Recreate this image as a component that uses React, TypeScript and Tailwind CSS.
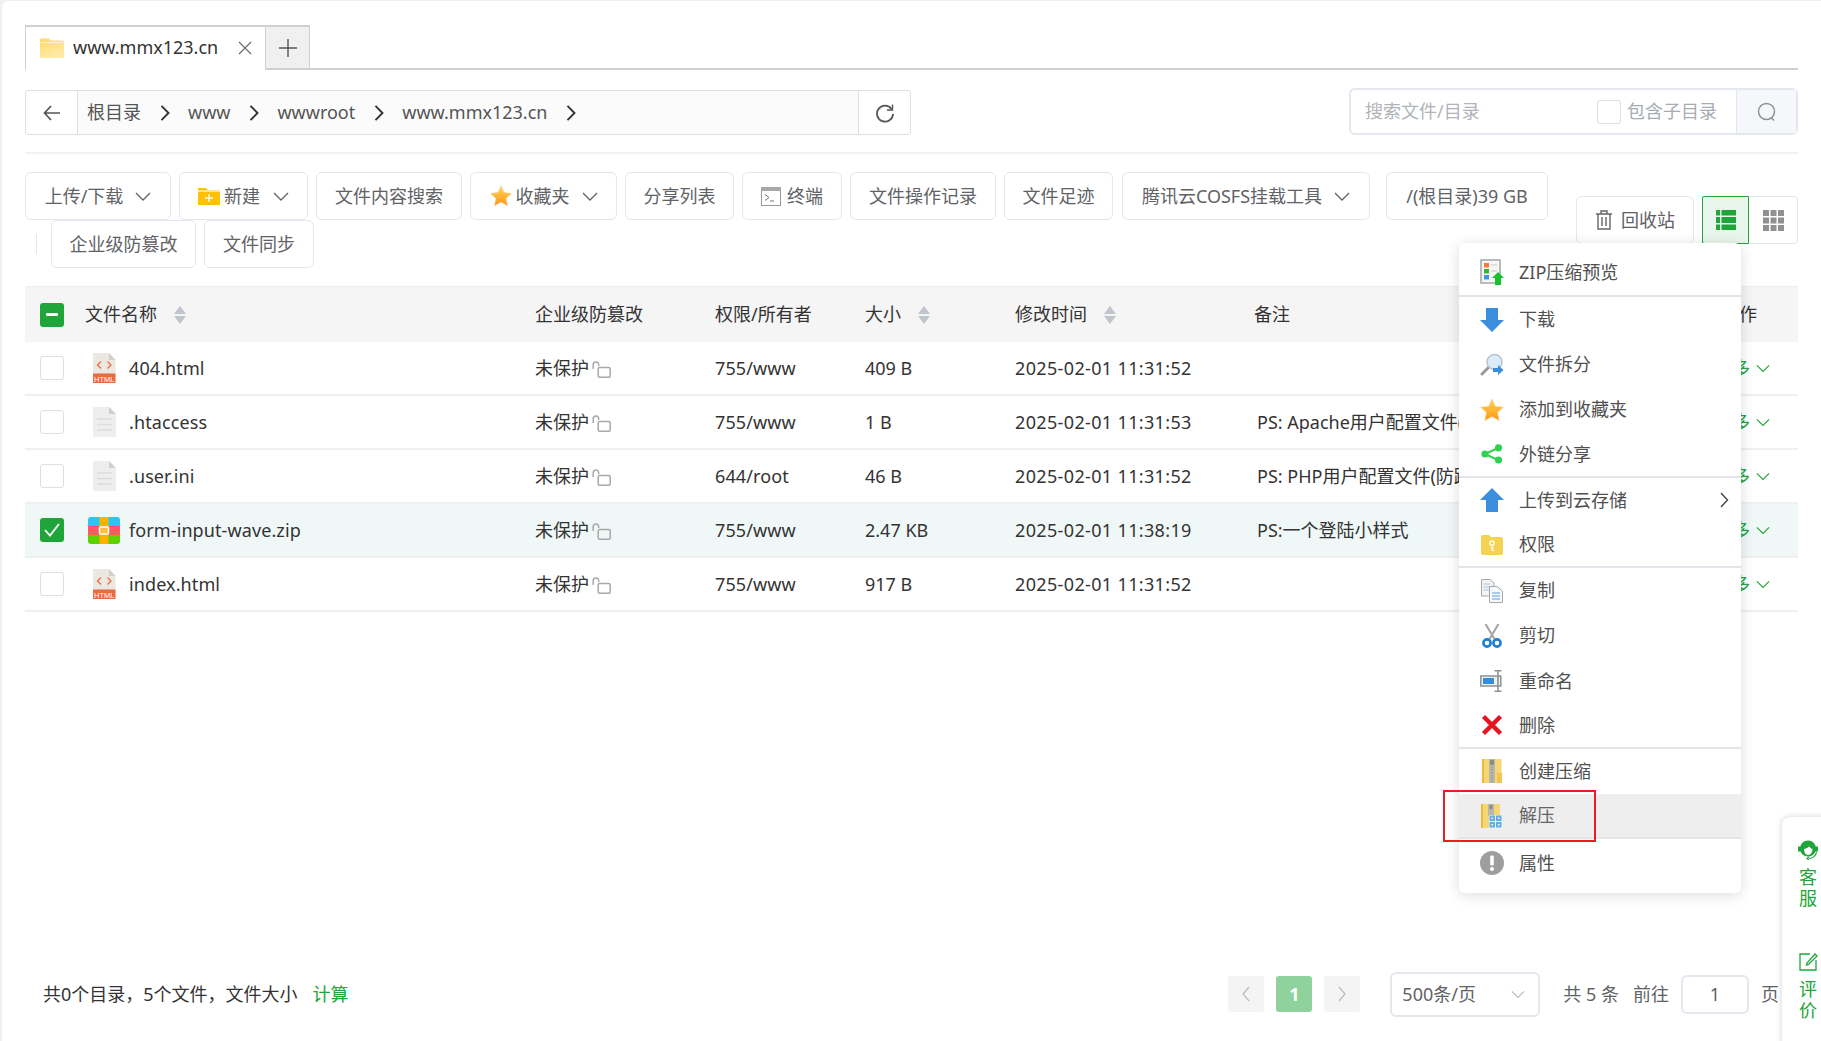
import React from "react";

const FF = { fontFamily: '"Noto Sans","Noto Sans CJK SC",sans-serif' };

function Chevron({ className = "", color = "#606266", size = 16 }: { className?: string; color?: string; size?: number }) {
  return (
    <svg width={size} height={size} viewBox="0 0 16 16" className={className} fill="none" stroke={color} strokeWidth="1.3">
      <path d="M1 5 L8 12 L15 5" />
    </svg>
  );
}
function PathArrow() {
  return (
    <svg width="10" height="16" viewBox="0 0 10 16" fill="none" stroke="#333" strokeWidth="1.9" className="mx-[18.5px]">
      <path d="M1.5 .8 L8.5 8 L1.5 15.2" />
    </svg>
  );
}
function Folder() {
  return (
    <svg width="24" height="20" viewBox="0 0 24 20">
      <defs>
        <linearGradient id="fg" x1="0" y1="0" x2="0.4" y2="1">
          <stop offset="0" stopColor="#ffd966" />
          <stop offset="1" stopColor="#ffe9a8" />
        </linearGradient>
      </defs>
      <path d="M0 2 Q0 .5 1.5 .5 H9 L11 2.5 H22.5 Q24 2.5 24 4 V18.5 Q24 20 22.5 20 H1.5 Q0 20 0 18.5 Z" fill="url(#fg)" />
      <rect x="1" y="4" width="22" height="1" fill="#fff3c8" />
    </svg>
  );
}
function NewFolder() {
  return (
    <svg width="22" height="18" viewBox="0 0 22 18" className="mr-[4px]">
      <path d="M0 1 H8 L10 3 H22 V18 H0 Z" fill="#ffc107" />
      <rect x="0" y="3" width="22" height="2" fill="#ffe58a" />
      <path d="M11 7 V15 M7 11 H15" stroke="#fff" strokeWidth="1.3" />
    </svg>
  );
}
function Star({ size = 22, className = "" }: { size?: number; className?: string }) {
  return (
    <svg width={size} height={size} viewBox="0 0 24 24" className={className}>
      <defs>
        <linearGradient id="sg" x1="0" y1="0" x2="0" y2="1">
          <stop offset="0" stopColor="#ffd75e" />
          <stop offset="1" stopColor="#ff9511" />
        </linearGradient>
      </defs>
      <path d="M12 1 L15.4 8.3 L23.4 9.2 L17.5 14.6 L19.1 22.6 L12 18.6 L4.9 22.6 L6.5 14.6 L.6 9.2 L8.6 8.3 Z" fill="url(#sg)" stroke="#f8c989" strokeWidth=".5" />
    </svg>
  );
}
function Term() {
  return (
    <svg width="20" height="19" viewBox="0 0 20 19" className="mr-[6px]">
      <rect x=".5" y=".5" width="19" height="18" fill="#fff" stroke="#999" />
      <rect x="0" y="0" width="20" height="4" fill="#a8a8a8" />
      <path d="M4 7.5 L8 10.5 L4 13.5 M9 14 H13" fill="none" stroke="#777" strokeWidth="1" />
    </svg>
  );
}
function Btn({ w, children, ml = "" }: { w: string; children: React.ReactNode; ml?: string }) {
  return (
    <div className={`h-[48px] flex items-center justify-center border border-[#e4e7ed] rounded-[6px] text-[18px] text-[#606266] bg-white ${w} ${ml}`}>
      {children}
    </div>
  );
}
function Sort() {
  return (
    <svg width="14" height="18" viewBox="0 0 14 18">
      <path d="M7 0 L13 8 H1 Z" fill="#c0c4cc" />
      <path d="M7 18 L13 10 H1 Z" fill="#c0c4cc" />
    </svg>
  );
}
function Lock() {
  return (
    <svg width="19" height="17" viewBox="0 0 19 17" className="ml-[3px] mt-[2px]" fill="none" stroke="#a8a8a8" strokeWidth="1.5">
      <path d="M1.2 8 V4 Q1.2 1 4 1 Q6.8 1 6.8 5" />
      <rect x="6.2" y="6.5" width="12" height="9.8" rx="1.5" />
    </svg>
  );
}
function HtmlIcon() {
  return (
    <svg width="24" height="30" viewBox="0 0 24 30">
      <path d="M1 0 H17 L23.5 7 V30 H1 Z" fill="#eae8e1" />
      <path d="M17 0 L23.5 7 H17 Z" fill="#d3d0c6" />
      <path d="M9 8.5 L5.5 12 L9 15.5 M15.5 8.5 L19 12 L15.5 15.5" fill="none" stroke="#e9734d" strokeWidth="1.4" />
      <rect x="1" y="20.5" width="22.5" height="9.5" fill="#ea6b3f" />
      <text x="12.2" y="28.6" textAnchor="middle" fontSize="7.5" fill="#fff" style={{ fontFamily: '"Liberation Sans",sans-serif' }}>HTML</text>
    </svg>
  );
}
function TxtIcon() {
  return (
    <svg width="24" height="30" viewBox="0 0 24 30">
      <path d="M1 0 H17 L24 7 V30 H1 Z" fill="#eeeeee" />
      <path d="M17 0 L24 7 H17 Z" fill="#cfcfcf" />
      <path d="M5 12 H20 M5 17.5 H20 M5 23 H20" stroke="#dcdcdc" strokeWidth="1.6" />
    </svg>
  );
}
function ZipIcon() {
  return (
    <svg width="32" height="27" viewBox="0 0 32 27" className="rounded-[3px]">
      <rect x="0" y="0" width="32" height="9" fill="#25c8f2" />
      <rect x="0" y="9" width="32" height="9" fill="#ff5a5f" />
      <rect x="0" y="18" width="32" height="9" fill="#5ed100" />
      <rect x="11.5" y="0" width="9" height="27" fill="#ffb000" />
      <rect x="11.5" y="10" width="9" height="7" rx="1" fill="#ffc040" stroke="#fff" strokeWidth="1.5" />
    </svg>
  );
}
function Check({ state }: { state: "none" | "part" | "on" }) {
  if (state === "part")
    return (
      <div className="w-[24px] h-[24px] rounded-[3px] bg-[#20a53a] flex items-center justify-center">
        <div className="w-[12px] h-[3px] bg-white rounded-[1px]" />
      </div>
    );
  if (state === "on")
    return (
      <div className="w-[24px] h-[24px] rounded-[3px] bg-[#20a53a] flex items-center justify-center">
        <svg width="16" height="14" viewBox="0 0 16 14" fill="none" stroke="#fff" strokeWidth="1.8">
          <path d="M1 7 L6 12.5 L15 1" />
        </svg>
      </div>
    );
  return <div className="w-[24px] h-[24px] rounded-[3px] border border-[#dcdfe6] bg-white" />;
}

const rows = [
  { n: "404.html", i: "h", p: "755/www", s: "409 B", t: "2025-02-01 11:31:52", r: "" },
  { n: ".htaccess", i: "t", p: "755/www", s: "1 B", t: "2025-02-01 11:31:53", r: "PS: Apache用户配置文件(伪静态)" },
  { n: ".user.ini", i: "t", p: "644/root", s: "46 B", t: "2025-02-01 11:31:52", r: "PS: PHP用户配置文件(防跨站)" },
  { n: "form-input-wave.zip", i: "z", p: "755/www", s: "2.47 KB", t: "2025-02-01 11:38:19", r: "PS:一个登陆小样式", on: true },
  { n: "index.html", i: "h", p: "755/www", s: "917 B", t: "2025-02-01 11:31:52", r: "" },
];

const cols = "grid grid-cols-[510px_180px_150px_150px_239px_1fr] items-center";

/* menu icons */
const IcZip = () => (
  <svg width="24" height="26" viewBox="0 0 24 26">
    <rect x="1" y="1" width="19" height="23" fill="#f6f6f4" stroke="#a5a8a6" strokeWidth="1.5" />
    <rect x="4" y="4" width="5" height="4.5" fill="#f3793c" />
    <rect x="4" y="10" width="5" height="4.5" fill="#37b233" />
    <rect x="4" y="16" width="5" height="4.5" fill="#3d96e0" />
    <path d="M11 6 H17 M11 12 H17" stroke="#c9c9c9" />
    <path d="M18 13 L24 19 H21 V26 H15 V19 H12 Z" fill="#17c22f" />
  </svg>
);
const IcDown = () => (
  <svg width="24" height="24" viewBox="0 0 24 24">
    <path d="M6 0 H18 V12 H24 L12 24 L0 12 H6 Z" fill="#3a8edb" />
  </svg>
);
const IcUp = () => (
  <svg width="24" height="24" viewBox="0 0 24 24">
    <path d="M12 0 L24 12 H18 V24 H6 V12 H0 Z" fill="#3a8edb" />
  </svg>
);
const IcSearch = () => (
  <svg width="24" height="24" viewBox="0 0 24 24">
    <path d="M9 14 L2 21" stroke="#9a9a9a" strokeWidth="3" strokeLinecap="round" />
    <circle cx="14.5" cy="9" r="7.5" fill="#dcecfa" stroke="#b4c4d2" strokeWidth="1.5" />
    <path d="M13 15 H18 V12 L23.5 17 L18 22 V19 H13 Z" fill="#3a8edb" />
  </svg>
);
const IcShare = () => (
  <svg width="22" height="20" viewBox="0 0 22 20">
    <path d="M18 3.5 L4 10 L18 16.5" fill="none" stroke="#2ed24e" strokeWidth="2" />
    <circle cx="17.5" cy="3.8" r="3.6" fill="#2ed24e" />
    <circle cx="4" cy="10" r="3.6" fill="#2ed24e" />
    <circle cx="17.5" cy="16" r="3.6" fill="#2ed24e" />
  </svg>
);
const IcPerm = () => (
  <svg width="22" height="20" viewBox="0 0 22 20">
    <path d="M0 2 Q0 0 2 0 H8 L10 2 H20 Q22 2 22 4 V18 Q22 20 20 20 H2 Q0 20 0 18 Z" fill="#f5d352" />
    <circle cx="11" cy="8" r="2.2" fill="none" stroke="#fff" strokeWidth="1.2" />
    <path d="M11 10 V16 M11 13 H13 M11 15.5 H13" stroke="#fff" strokeWidth="1.2" />
  </svg>
);
const IcCopy = () => (
  <svg width="22" height="24" viewBox="0 0 22 24">
    <path d="M.5 .5 H9 L13 4 V17 H.5 Z" fill="#f3f3f3" stroke="#a8a8a8" />
    <path d="M2.5 5 H9 M2.5 8 H9 M2.5 11 H9" stroke="#a4c6ea" />
    <path d="M8.5 7.5 H16 L21.5 12 V23.5 H8.5 Z" fill="#f6f8fb" stroke="#a8a8a8" />
    <path d="M11 14 H19 M11 17 H19 M11 20 H19" stroke="#5b9bdf" strokeWidth="1.2" />
  </svg>
);
const IcCut = () => (
  <svg width="20" height="24" viewBox="0 0 20 24">
    <path d="M3.5 0 L12.5 15 M16.5 0 L7.5 15" stroke="#a4a8ac" strokeWidth="2.2" fill="none" />
    <circle cx="5" cy="19" r="3.6" fill="none" stroke="#1f7fd1" strokeWidth="2.6" />
    <circle cx="15" cy="19" r="3.6" fill="none" stroke="#1f7fd1" strokeWidth="2.6" />
  </svg>
);
const IcRename = () => (
  <svg width="24" height="22" viewBox="0 0 24 22">
    <rect x=".8" y="6" width="20" height="10" fill="#eef0f2" stroke="#8d9296" strokeWidth="1.5" />
    <rect x="3" y="8" width="11" height="6" fill="#2f8ee0" />
    <path d="M18 1 V21 M14.5 .8 H21.5 M14.5 21.2 H21.5" stroke="#8d9296" strokeWidth="1.6" />
  </svg>
);
const IcDel = () => (
  <svg width="22" height="22" viewBox="0 0 22 22">
    <path d="M2.5 2.5 L19.5 19.5 M19.5 2.5 L2.5 19.5" stroke="#e5141f" strokeWidth="4.5" />
  </svg>
);
const IcCompress = () => (
  <svg width="20" height="24" viewBox="0 0 20 24">
    <rect x="0" y="0" width="19.5" height="24" fill="#f6d675" />
    <rect x="0" y="0" width="2" height="24" fill="#eab93e" />
    <path d="M15 14 H20 V24 H15 Z" fill="#f1c550" />
    <rect x="7" y="0" width="6" height="24" fill="#b9b7ab" />
    <path d="M10 1 V23" stroke="#8b8b85" strokeWidth="1" strokeDasharray="1.5 1.5" />
    <rect x="8" y="1" width="4" height="5" rx="1" fill="#8b8b85" />
  </svg>
);
const IcExtract = () => (
  <svg width="21" height="24" viewBox="0 0 21 24">
    <rect x="0" y="0" width="19" height="24" fill="#f6d675" />
    <rect x="0" y="0" width="2" height="24" fill="#eab93e" />
    <rect x="7" y="0" width="6" height="12" fill="#b9b7ab" />
    <rect x="8.5" y="1" width="3" height="4" rx="1" fill="#8b8b85" />
    <rect x="8" y="11" width="13" height="13" fill="#eaf4fc" />
    <rect x="8.5" y="11.5" width="5.5" height="5.5" fill="#61aee6" />
    <rect x="15" y="11.5" width="5.5" height="5.5" fill="#61aee6" />
    <rect x="8.5" y="18" width="5.5" height="5.5" fill="#61aee6" />
    <rect x="15" y="18" width="5.5" height="5.5" fill="#61aee6" />
    <rect x="10.5" y="13.5" width="1.5" height="1.5" fill="#fff" />
    <rect x="17" y="13.5" width="1.5" height="1.5" fill="#fff" />
    <rect x="10.5" y="20" width="1.5" height="1.5" fill="#fff" />
    <rect x="17" y="20" width="1.5" height="1.5" fill="#fff" />
  </svg>
);
const IcInfo = () => (
  <svg width="24" height="24" viewBox="0 0 24 24">
    <circle cx="12" cy="12" r="12" fill="#9e9e9e" />
    <rect x="10.2" y="4.5" width="3.6" height="10" rx="1.2" fill="#fff" />
    <circle cx="12" cy="18" r="2" fill="#fff" />
  </svg>
);

type MI = { t: string; ic: React.ReactNode; h: number; sep?: boolean; hover?: boolean; sub?: boolean };
const H = 45.2;
const menu: MI[] = [
  { t: "ZIP压缩预览", ic: <IcZip />, h: 48, sep: true },
  { t: "下载", ic: <IcDown />, h: H },
  { t: "文件拆分", ic: <IcSearch />, h: H },
  { t: "添加到收藏夹", ic: <Star size={24} />, h: H },
  { t: "外链分享", ic: <IcShare />, h: H, sep: true },
  { t: "上传到云存储", ic: <IcUp />, h: H, sub: true },
  { t: "权限", ic: <IcPerm />, h: H, sep: true },
  { t: "复制", ic: <IcCopy />, h: H },
  { t: "剪切", ic: <IcCut />, h: H },
  { t: "重命名", ic: <IcRename />, h: H },
  { t: "删除", ic: <IcDel />, h: H, sep: true },
  { t: "创建压缩", ic: <IcCompress />, h: H },
  { t: "解压", ic: <IcExtract />, h: H, hover: true, sep: true },
  { t: "属性", ic: <IcInfo />, h: 48 },
];

export default function App() {
  return (
    <div className="w-[1821px] h-[1041px] overflow-hidden relative bg-[#f0f0f0] text-[18px]" style={FF}>
      <div className="ml-[2px] mt-[1px] h-[1040px] bg-white rounded-tl-[6px] px-[23px] pt-[24px] pb-[24px] flex flex-col">
        {/* tabs */}
        <div className="h-[45px] shrink-0 flex items-stretch border-b-2 border-[#d0d0d0]">
          <div className="w-[240px] bg-white border-t-2 border-l border-[#d0d0d0] flex items-center pl-[14px] -mb-[2px] pb-[2px]">
            <Folder />
            <span className="ml-[9px] text-[18px] text-[#333] w-[146px]">www.mmx123.cn</span>
            <svg width="14" height="14" viewBox="0 0 14 14" stroke="#666" strokeWidth="1.1" className="ml-[19px]">
              <path d="M1 1 L13 13 M13 1 L1 13" />
            </svg>
          </div>
          <div className="w-[45px] bg-[#f0f0f0] border-t-2 border-x border-[#d0d0d0] flex items-center justify-center">
            <svg width="18" height="18" viewBox="0 0 18 18" stroke="#555" strokeWidth="1.4">
              <path d="M9 0 V18 M0 9 H18" />
            </svg>
          </div>
        </div>
        {/* path + search */}
        <div className="flex justify-between mt-[18px] border-b-2 border-[#f2f2f2] h-[66px] shrink-0">
          <div className="flex h-[45px] w-[886px] border border-[#dcdfe6] rounded-[3px] mt-[2px]">
            <div className="w-[52px] flex items-center justify-center border-r border-[#dcdfe6]">
              <svg width="18" height="16" viewBox="0 0 18 16" fill="none" stroke="#555" strokeWidth="1.7">
                <path d="M8 1 L1.5 8 L8 15 M1.5 8 H17" />
              </svg>
            </div>
            <div className="w-[781px] bg-[#fbfbfb] flex items-center pl-[9px] text-[#555] border-r border-[#dcdfe6]">
              <span>根目录</span>
              <PathArrow />
              <span>www</span>
              <PathArrow />
              <span>wwwroot</span>
              <PathArrow />
              <span>www.mmx123.cn</span>
              <PathArrow />
            </div>
            <div className="flex-1 flex items-center justify-center">
              <svg width="20" height="20" viewBox="0 0 20 20" fill="none" stroke="#555" strokeWidth="1.8">
                <path d="M16.5 6 A8 8 0 1 0 18 11" />
                <path d="M17.5 1.5 V7 H12" strokeWidth="1.4" />
              </svg>
            </div>
          </div>
          <div className="flex h-[47px] w-[449px] border-2 border-[#e4e7ed] rounded-[6px]">
            <div className="flex-1 flex items-center pl-[14px] text-[#b0b3b8]">
              <span className="w-[232px]">搜索文件/目录</span>
              <div className="w-[24px] h-[24px] border border-[#dcdfe6] rounded-[3px]" />
              <span className="ml-[6px] text-[#a8abb2]">包含子目录</span>
            </div>
            <div className="w-[60px] bg-[#f5f7fa] border-l border-[#e4e7ed] flex items-center justify-center">
              <svg width="20" height="20" viewBox="0 0 20 20" fill="none" stroke="#8d9095" strokeWidth="1.5">
                <circle cx="9.5" cy="9.5" r="8" />
                <path d="M14 15.5 L17 18.5" />
              </svg>
            </div>
          </div>
        </div>
        {/* toolbar */}
        <div className="flex items-center justify-between mt-[18px] h-[96px] shrink-0">
          <div className="flex flex-col">
            <div className="flex gap-[8px]">
              <Btn w="w-[146px]">上传/下载<Chevron className="ml-[12px]" /></Btn>
              <Btn w="w-[129px]"><NewFolder />新建<Chevron className="ml-[13px]" /></Btn>
              <Btn w="w-[146px]">文件内容搜索</Btn>
              <Btn w="w-[147px]"><Star className="mr-[4px]" />收藏夹<Chevron className="ml-[12px]" /></Btn>
              <Btn w="w-[109px]">分享列表</Btn>
              <Btn w="w-[100px]"><Term />终端</Btn>
              <Btn w="w-[146px]">文件操作记录</Btn>
              <Btn w="w-[109px]">文件足迹</Btn>
              <Btn w="w-[248px]" ml="ml-[1px]">腾讯云COSFS挂载工具<Chevron className="ml-[12px]" /></Btn>
              <Btn w="w-[162px]" ml="ml-[8px]">/(根目录)39 GB</Btn>
            </div>
            <div className="flex gap-[8px] items-center">
              <div className="w-px h-[20px] bg-[#e4e7ed] ml-[11px] mr-[6px]" />
              <Btn w="w-[145px]">企业级防篡改</Btn>
              <Btn w="w-[110px]">文件同步</Btn>
            </div>
          </div>
          <div className="flex items-center">
            <Btn w="w-[118px]">
              <svg width="18" height="20" viewBox="0 0 18 20" fill="none" stroke="#666" strokeWidth="1.4" className="mr-[8px]">
                <path d="M1 4 H17 M6 4 V1 H12 V4 M3 4 V19 H15 V4 M7 7 V16 M11 7 V16" />
              </svg>
              回收站
            </Btn>
            <div className="w-[47px] h-[48px] ml-[8px] bg-[#e8f5ea] border border-[#20a53a] flex items-center justify-center rounded-l-[2px]">
              <svg width="20" height="20" viewBox="0 0 20 20" fill="#20a53a">
                <rect x="0" y="0" width="4" height="5.5" />
                <rect x="5.5" y="0" width="14.5" height="5.5" />
                <rect x="0" y="7" width="4" height="6" />
                <rect x="5.5" y="7" width="14.5" height="6" />
                <rect x="0" y="14.5" width="4" height="5.5" />
                <rect x="5.5" y="14.5" width="14.5" height="5.5" />
              </svg>
            </div>
            <div className="w-[49px] h-[48px] border border-l-0 border-[#e4e7ed] flex items-center justify-center rounded-r-[4px]">
              <svg width="21" height="21" viewBox="0 0 21 21" fill="#909090">
                {[0, 7.5, 15].flatMap((y) => [0, 7.5, 15].map((x) => <rect key={`${x}-${y}`} x={x} y={y} width="6" height="6" />))}
              </svg>
            </div>
          </div>
        </div>
        {/* table */}
        <div className="mt-[18px] text-[#333] shrink-0">
          <div className={`${cols} h-[56px] bg-[#f5f5f5] border-t border-[#eeeeee]`}>
            <div className="flex items-center pl-[15px]">
              <Check state="part" />
              <span className="ml-[21px] text-[#333]">文件名称</span>
              <span className="ml-[16px] flex"><Sort /></span>
            </div>
            <div>企业级防篡改</div>
            <div>权限/所有者</div>
            <div className="flex items-center">大小<span className="ml-[16px] flex"><Sort /></span></div>
            <div className="flex items-center">修改时间<span className="ml-[16px] flex"><Sort /></span></div>
            <div className="flex items-center justify-between pr-[41px]"><span>备注</span><span>操作</span></div>
          </div>
          {rows.map((r) => (
            <div key={r.n} className={`${cols} h-[54px] border-b-2 border-[#f0f0f0] ${r.on ? "bg-[#f0f8f7]" : "bg-white"}`}>
              <div className="flex items-center pl-[15px]">
                <Check state={r.on ? "on" : "none"} />
                <span className="w-[65px] pl-[14px] flex items-center justify-center">
                  {r.i === "h" ? <HtmlIcon /> : r.i === "t" ? <TxtIcon /> : <ZipIcon />}
                </span>
                <span className="tracking-[0.1px]">{r.n}</span>
              </div>
              <div className="flex items-center">未保护<Lock /></div>
              <div className="tracking-[0.1px]">{r.p}</div>
              <div>{r.s}</div>
              <div className="tracking-[0.35px]">{r.t}</div>
              <div className="flex items-center justify-between pl-[3px] pr-[28px] whitespace-nowrap overflow-hidden">
                <span>{r.r}</span>
                <span className="flex items-center text-[#20a53a] shrink-0 ml-auto">更多<Chevron color="#20a53a" size={14} className="ml-[6px]" /></span>
              </div>
            </div>
          ))}
        </div>
        {/* footer */}
        <div className="mt-auto pl-[18px] pr-[19px] h-[46px] shrink-0 flex items-center text-[#333]">
          <span>共0个目录，5个文件，文件大小</span>
          <span className="ml-[15px] text-[#20a53a]">计算</span>
          <div className="ml-auto flex items-center text-[#606266]">
            <div className="w-[36px] h-[36px] bg-[#f4f4f5] rounded-[3px] flex items-center justify-center">
              <svg width="10" height="16" viewBox="0 0 10 16" fill="none" stroke="#b8bcc4" strokeWidth="1.2"><path d="M8 1 L2 8 L8 15" /></svg>
            </div>
            <div className="w-[36px] h-[36px] ml-[12px] bg-[#90d29d] rounded-[3px] flex items-center justify-center text-white font-bold">1</div>
            <div className="w-[36px] h-[36px] ml-[12px] bg-[#f4f4f5] rounded-[3px] flex items-center justify-center">
              <svg width="10" height="16" viewBox="0 0 10 16" fill="none" stroke="#b8bcc4" strokeWidth="1.2"><path d="M2 1 L8 8 L2 15" /></svg>
            </div>
            <div className="w-[150px] h-[45px] ml-[30px] border-2 border-[#e4e7ed] rounded-[6px] flex items-center justify-between pl-[10px] pr-[13px]">
              <span>500条/页</span>
              <Chevron color="#b8bcc4" size={14} />
            </div>
            <span className="ml-[23px] whitespace-pre">共 5 条</span>
            <span className="ml-[14px]">前往</span>
            <div className="w-[68px] h-[39px] ml-[12px] border-2 border-[#e4e7ed] rounded-[6px] flex items-center justify-center">1</div>
            <span className="ml-[12px]">页</span>
          </div>
        </div>
      </div>

      {/* context menu */}
      <div className="absolute left-[1459px] top-[243px] w-[282px] py-[6px] bg-white rounded-[6px] shadow-[0_2px_14px_rgba(0,0,0,0.14)] text-[18px] text-[#505050] overflow-hidden">
        {menu.map((m) => (
          <div
            key={m.t}
            style={{ height: m.h }}
            className={`flex items-center relative ${m.sep ? "border-b-2 border-[#e4e4ea]" : ""} ${m.hover ? "bg-[#eeeeee] text-[#666]" : ""}`}
          >
            <span className="w-[60px] pl-[5px] flex justify-center">{m.ic}</span>
            <span>{m.t}</span>
            {m.sub && (
              <svg width="10" height="16" viewBox="0 0 10 16" fill="none" stroke="#444" strokeWidth="1.4" className="absolute right-[12px] top-[14px]">
                <path d="M2 1 L8.5 8 L2 15" />
              </svg>
            )}
          </div>
        ))}
      </div>
      {/* red annotation */}
      <div className="absolute left-[1443px] top-[790px] w-[153px] h-[52px] border-2 border-[#ec1c24]" />

      {/* float panel */}
      <div className="absolute left-[1782px] top-[817px] w-[60px] h-[240px] bg-white rounded-l-[8px] shadow-[0_0_6px_rgba(0,0,0,0.18)] flex flex-col items-start pl-[17px] text-[#20a53a] text-[18px] leading-[21px]">
        <svg width="20" height="20" viewBox="0 0 20 20" className="mt-[23px] -ml-[1px]">
          <circle cx="10" cy="8.5" r="8" fill="#20a53a" />
          <path d="M6 9 Q9 8.5 11 6.5 Q13 8.5 14.5 9 Q14.5 14.5 10 15 Q6 14.5 6 9 Z" fill="#fff" />
          <path d="M0 6.5 H3 V11.5 H0 Z M17 6.5 H20 V11.5 H17 Z" fill="#20a53a" />
          <path d="M18.5 12 Q17.5 18 11 18.5 M11 16.8 L9 18.5 L11 20" fill="none" stroke="#20a53a" strokeWidth="1.2" />
        </svg>
        <span className="mt-[7px]">客</span>
        <span>服</span>
        <svg width="19" height="18" viewBox="0 0 19 18" fill="none" stroke="#20a53a" strokeWidth="1.3" className="mt-[44px]">
          <path d="M11 1 H1 V17 H17 V7" />
          <path d="M16 1 L8 10 L7.5 12 L9.5 11.5 L18 3 Z" />
        </svg>
        <span className="mt-[8px]">评</span>
        <span>价</span>
      </div>
    </div>
  );
}
